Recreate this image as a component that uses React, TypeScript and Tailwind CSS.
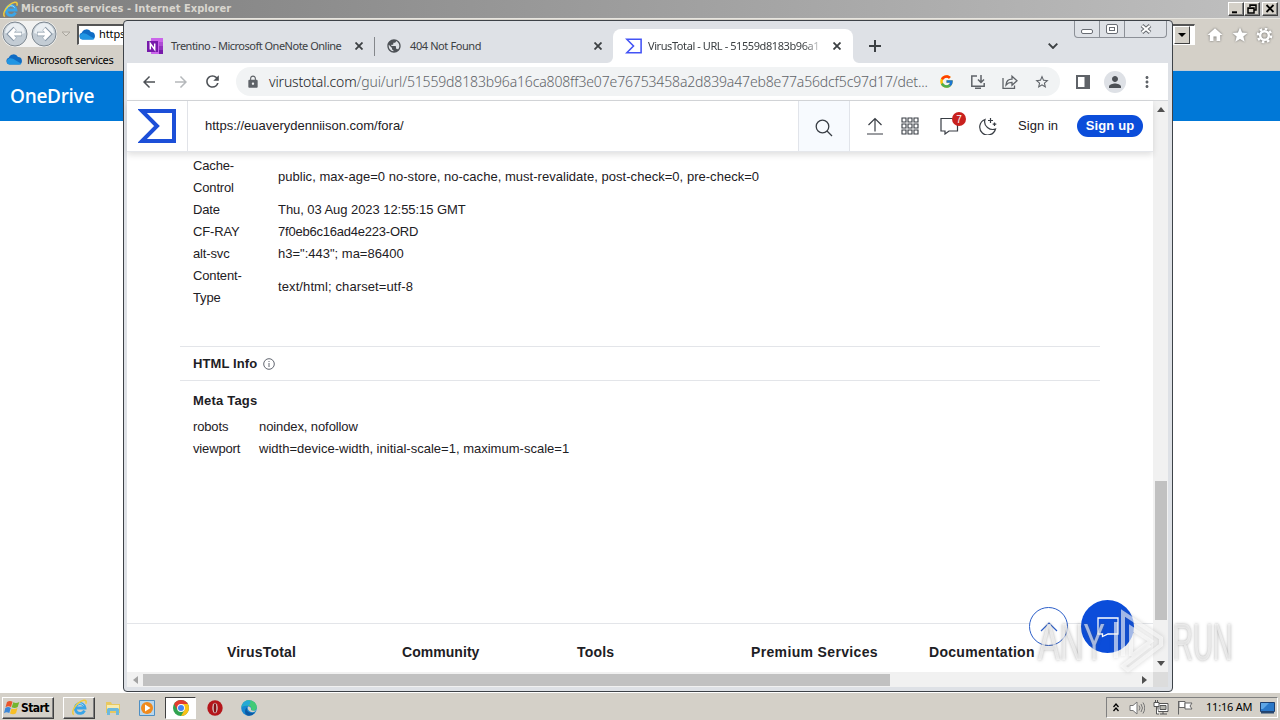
import React from 'react';
import {
  MdArrowBack,
  MdArrowForward,
  MdHome,
  MdLock,
  MdMoreVert,
  MdPerson,
  MdPublic,
  MdRefresh,
  MdStar,
  MdStarBorder,
} from 'react-icons/md';
import { FcGoogle } from 'react-icons/fc';

const headers = [
  { name: ['Cache-', 'Control'], value: 'public, max-age=0 no-store, no-cache, must-revalidate, post-check=0, pre-check=0', tracking: 'tracking-[0.03px]' },
  { name: ['Date'], value: 'Thu, 03 Aug 2023 12:55:15 GMT', tracking: 'tracking-[-0.06px]' },
  { name: ['CF-RAY'], value: '7f0eb6c16ad4e223-ORD', tracking: 'tracking-[-0.22px]' },
  { name: ['alt-svc'], value: 'h3=":443"; ma=86400', tracking: 'tracking-[0px]' },
  { name: ['Content-', 'Type'], value: 'text/html; charset=utf-8', tracking: 'tracking-[0.1px]' },
];

const metaTags = [
  { name: 'robots', value: 'noindex, nofollow', tracking: 'tracking-[-0.1px]' },
  { name: 'viewport', value: 'width=device-width, initial-scale=1, maximum-scale=1', tracking: 'tracking-[0.01px]' },
];

const Cloud = ({ className }: { className: string }) => (
  <svg viewBox="0 0 16 12" className={className}>
    <path d="M3.500 10.800A3.300 3.300 0 0 1 2.600 4.400 4.800 4.800 0 0 1 11.300 3.600a3.700 3.700 0 0 1 1.200 7.200z" fill="#0f6cc4" />
    <path d="M3.300 10.800a3 3 0 0 1-.5-5.800c2.500-.5 4 .3 5.700 1.500l6 3.500c-.5.6-1 .8-2 .8z" fill="#2196e3" />
  </svg>
);

const IeLogo = ({ className }: { className: string }) => (
  <svg viewBox="0 0 18 18" className={className} fill="none">
    <path d="M14.300 12.300a5.200 5.200 0 1 1 .5-2.800H5.500" stroke="#3aa5e8" strokeWidth="3" />
    <path d="M13.500 7a4.800 4.800 0 0 0-8.500 1" stroke="#a5dcf8" strokeWidth="1" />
    <path d="M3 16.500C-1 14 6 3 13.500 1.300c2.700-.3 3 1.700 2.200 3.700" stroke="#f0cb3c" strokeWidth="1.600" />
  </svg>
);

const Sigma = ({ className, color, width }: { className: string; color: string; width: number }) => (
  <svg viewBox="0 0 38 34" className={className} fill="none">
    <path d="M4 2h32v30H4l15-15z" stroke={color} strokeWidth={width} />
  </svg>
);

const TabClose = () => (
  <svg viewBox="0 0 8 8" className="size-2 shrink-0" fill="none" stroke="#3c4043" strokeWidth="1.800">
    <path d="m.5.500 7 7m0-7-7 7" />
  </svg>
);

const OneNote = () => (
  <svg viewBox="0 0 16 16" className="size-4 shrink-0">
    <path d="M4 0h12v16H4z" fill="#ca64ea" />
    <path d="M12 4h4v4h-4z" fill="#ae4bd5" />
    <path d="M12 8h4v4h-4z" fill="#9332bf" />
    <path d="M12 12h4v4h-4z" fill="#7719aa" />
    <path d="M0 3h11v11H0z" fill="#7719aa" />
    <path d="M3.300 11.500v-6l4.400 6v-6" stroke="#fff" strokeWidth="1.500" fill="none" />
  </svg>
);

const ClassicButton = ({ children }: { children: React.ReactNode }) => (
  <div className="h-[14px] w-4 border border-t-white border-l-white border-r-[#404040] border-b-[#404040] bg-[#d4d0c8] shadow-[inset_-1px_-1px_0_#808080]">
    <svg viewBox="0 0 14 12" className="h-3 w-[14px]" fill="none" stroke="#000" strokeWidth="1.500">
      {children}
    </svg>
  </div>
);

const RoundArrow = ({ flip }: { flip?: boolean }) => (
  <svg viewBox="0 0 26 26" className={flip ? 'size-[26px] -scale-x-100' : 'size-[26px]'}>
    <circle cx="13" cy="13" r="12" fill="#c3ccd4" stroke="#7d8790" />
    <path d="M3 12a10 10 0 0 1 20 0q-10 4-20 0" fill="#e9eef2" />
    <path d="M20 13H7.500M13 7.500 7.500 13l5.500 5.500" stroke="#8796a5" strokeWidth="4.600" fill="none" />
    <path d="M19.500 13H8m5-5-5 5 5 5" stroke="#fff" strokeWidth="3.200" fill="none" />
  </svg>
);

const ExplorerWindow = () => (
  <div className="flex h-[692px] flex-col bg-white">
    <div className="flex h-[18px] items-center bg-linear-to-r from-[#7d7d7d] to-[#c0c0c0] pr-0.5 pl-0.5">
      <IeLogo className="size-[17px]" />
      <span className="ml-0.5 font-['DejaVu_Sans_Condensed','DejaVu_Sans',sans-serif] text-[11px] font-bold tracking-[0.04px] text-[#d9d6cf]">
        Microsoft services - Internet Explorer
      </span>
      <div className="ml-auto flex">
        <ClassicButton>
          <path d="M3 9.300h5" strokeWidth="2" />
        </ClassicButton>
        <ClassicButton>
          <path d="M5 4V2h6v5H9M3 5h6v5H3zM3 5.300h6M5 2.300h6" />
        </ClassicButton>
        <span className="w-0.5" />
        <ClassicButton>
          <path d="m3.500 2 7 7m0-7-7 7" strokeWidth="1.800" />
        </ClassicButton>
      </div>
    </div>
    <div className="flex h-[31px] items-center border-t border-[#e8e6e0] bg-[#d4d0c8] pl-[2px]">
      <div className="flex gap-[3px] rounded-full bg-[#f2f2f1]">
        <RoundArrow />
        <RoundArrow flip />
      </div>
      <svg viewBox="0 0 10 6" className="ml-1 h-[6px] w-[10px]">
        <path d="M1 1h8L5 5z" fill="#dedbd4" stroke="#aaa69e" />
      </svg>
      <div className="ml-[6px] flex h-[21px] w-[1118px] items-center border-t-2 border-r border-b border-l-2 border-t-[#555] border-r-white border-b-white border-l-[#555] bg-white">
        <Cloud className="h-[13px] w-[17px]" />
        <span className="ml-[3px] font-['Noto_Sans',sans-serif] text-[11px] tracking-[-0.1px] text-black">https</span>
        <div className="mr-1 ml-auto flex h-[18px] w-4 items-center justify-center border border-t-white border-l-white border-r-[#404040] border-b-[#404040] bg-[#d4d0c8]">
          <svg viewBox="0 0 8 4" className="h-1 w-2">
            <path d="M0 0h8L4 4z" />
          </svg>
        </div>
      </div>
      <div className="ml-auto flex items-center gap-[7px] pt-0.5 pr-[7px] text-white drop-shadow-[0_0_1px_#666]">
        <MdHome className="size-[18px]" />
        <MdStar className="size-[18px]" />
        <svg viewBox="0 0 18 18" className="size-[17px]" fill="none" stroke="#fff">
          <circle cx="9" cy="9" r="4.600" strokeWidth="2.600" />
          <circle cx="9" cy="9" r="7" strokeWidth="2.600" strokeDasharray="2.750 2.750" />
        </svg>
      </div>
    </div>
    <div className="flex h-[22px] items-center border-b border-[#c3ccd4] bg-[#d4d0c8] pl-1.5">
      <Cloud className="h-[13px] w-[17px]" />
      <span className="ml-1 pt-px font-['Noto_Sans',sans-serif] text-[11px] tracking-[-0.36px] text-black">Microsoft services</span>
    </div>
    <div className="flex h-[50px] items-center bg-[#0078d7] pl-[10px]">
      <span className="font-['Open_Sans',sans-serif] text-[19px] font-semibold tracking-[-0.3px] text-white">OneDrive</span>
    </div>
  </div>
);

const TabStrip = () => (
  <div className="relative flex h-[42px] items-end font-['Noto_Sans',sans-serif] text-[11px] text-[#3c4043]">
    <div className="flex h-[34px] w-[248px] items-center pl-5">
      <OneNote />
      <span className="ml-2 w-[184px] whitespace-nowrap tracking-[-0.5px]">Trentino - Microsoft OneNote Online</span>
      <TabClose />
      <span className="ml-[11px] h-[19px] w-px bg-[#84878b]" />
    </div>
    <div className="flex h-[34px] w-[238px] items-center pl-[11px]">
      <MdPublic className="size-4 shrink-0 text-[#4d5156]" />
      <span className="ml-2 w-[184px] tracking-[-0.4px]">404 Not Found</span>
      <TabClose />
    </div>
    <div className="relative flex h-[34px] w-[240px] items-center rounded-t-lg bg-white pl-3">
      <svg viewBox="0 0 6 6" className="absolute bottom-0 -left-1.5 size-1.5">
        <path d="M6 0v6H0a6 6 0 0 0 6-6" fill="#fff" />
      </svg>
      <svg viewBox="0 0 6 6" className="absolute -right-1.5 bottom-0 size-1.5">
        <path d="M0 0v6h6a6 6 0 0 1-6-6" fill="#fff" />
      </svg>
      <Sigma className="h-4 w-[17px] shrink-0" color="#4353f5" width={3.5} />
      <span className="ml-1.5 w-[176px] mask-r-from-88% whitespace-nowrap tracking-[-0.42px]">VirusTotal - URL - 51559d8183b96a1</span>
      <span className="ml-[9px]">
        <TabClose />
      </span>
    </div>
    <svg viewBox="0 0 12 12" className="mb-[11px] ml-4 size-3" stroke="#3c4043" strokeWidth="2">
      <path d="M6 0v12M0 6h12" />
    </svg>
    <svg viewBox="0 0 10 6" className="mb-[14px] ml-[167px] h-[6px] w-[10px]" fill="none" stroke="#3c4043" strokeWidth="1.900">
      <path d="m.7.700 4.300 4.300L9.300.700" />
    </svg>
    <div className="absolute top-0 right-px flex h-[17px] w-[93px] rounded-b border border-t-0 border-[#8c9097]">
      <div className="flex w-[25px] items-center justify-center border-r border-[#8c9097]">
        <span className="mt-1 h-[5px] w-3 rounded-[2px] border border-[#686c73] bg-white" />
      </div>
      <div className="flex w-[25px] items-center justify-center border-r border-[#8c9097]">
        <span className="flex h-[10px] w-3 items-center justify-center rounded-[2px] border border-[#686c73] bg-white">
          <span className="h-1 w-[6px] border border-[#686c73]" />
        </span>
      </div>
      <div className="flex flex-1 items-center justify-center">
        <svg viewBox="0 0 12 10" className="h-[10px] w-3">
          <path d="m2 1.500 8 7m0-7-8 7" stroke="#666a70" strokeWidth="4" />
          <path d="m2.200 1.700 7.600 6.600m0-6.600-7.600 6.600" stroke="#fff" strokeWidth="2" />
        </svg>
      </div>
    </div>
  </div>
);

const Toolbar = () => (
  <div className="flex h-[38px] items-center border-b border-[#d5d7da] bg-white pl-[13px] text-[#5f6368]">
    <MdArrowBack className="size-[18px] text-[#4d5156]" />
    <MdArrowForward className="ml-[14px] size-[18px] text-[#b5b8bb]" />
    <MdRefresh className="ml-[13px] size-[19px] text-[#4d5156]" />
    <div className="ml-[14px] flex h-[29px] w-[824px] items-center rounded-full bg-[#f1f3f4] pl-[10px]">
      <MdLock className="size-[14px]" />
      <span className="ml-[9px] w-[661px] whitespace-nowrap font-['Noto_Sans',sans-serif] text-[14px] font-light tracking-[-0.15px] text-[#5f6368]">
        <span className="text-[#202124]">virustotal.com</span>/gui/url/51559d8183b96a16ca808ff3e07e76753458a2d839a47eb8e77a56dcf5c97d17/det...
      </span>
      <div className="ml-[9px] flex items-center gap-4">
        <FcGoogle className="size-[15px]" />
        <svg viewBox="0 0 16 16" className="size-4" fill="none" stroke="currentColor" strokeWidth="1.500">
          <path d="M7 2H1.800v10.200h12.400V9M5 14.200h6M11 1v7M8 5.500 11 8.500l3-3" />
        </svg>
        <svg viewBox="0 0 16 16" className="size-4" fill="none" stroke="currentColor" strokeWidth="1.300">
          <path d="M1 4v10.300h11.500V11.500M4 11c.3-4 2.700-5.800 6-5.800V2.300l5 4.500-5 4.500V8.300C7.500 8.200 5.600 9 4 11z" />
        </svg>
        <MdStarBorder className="size-4" />
      </div>
    </div>
    <svg viewBox="0 0 14 14" className="ml-4 size-[14px]">
      <path d="M0 0h14v14H0zM2 2v10h6.500V2z" fill="currentColor" fillRule="evenodd" />
    </svg>
    <div className="ml-[14px] flex size-[22px] items-center justify-center rounded-full bg-[#dee1e6]">
      <MdPerson className="size-[18px] text-[#4d5156]" />
    </div>
    <MdMoreVert className="ml-3 size-[18px]" />
  </div>
);

const PageHeader = () => (
  <div className="relative z-10 flex h-[51px] items-center border-b border-[#e5e7eb] bg-white text-[13px] text-[#1d2024] shadow-[0_3px_6px_rgba(0,0,0,0.12)]">
    <div className="flex h-full w-[61px] items-center border-r border-[#e1e3e8] pl-[11px]">
      <Sigma className="h-[34px] w-[38px]" color="#1c4fd8" width={4} />
    </div>
    <span className="ml-[17px] w-[593px] tracking-[0px]">https://euaverydenniison.com/fora/</span>
    <div className="flex h-full w-[52px] items-center justify-center border-x border-[#e1e4ea] bg-[#f7fafe]">
      <svg viewBox="0 0 18 18" className="mt-[3px] size-[18px]" fill="none" stroke="#383d44" strokeWidth="1.300">
        <circle cx="7.500" cy="7.500" r="6.300" />
        <path d="m12 12 5 5" />
      </svg>
    </div>
    <svg viewBox="0 0 16 18" className="ml-[17px] h-[18px] w-4" fill="none" stroke="#383d44" strokeWidth="1.200">
      <path d="M8 14.500V1.500M1.500 8 8 1.500 14.500 8M0 17h16" />
    </svg>
    <svg viewBox="0 0 18 18" className="ml-[18px] size-[18px]" fill="none" stroke="#383d44" strokeWidth="1.100">
      {[1, 7, 13].map((y) => [1, 7, 13].map((x) => <path key={`${x}-${y}`} d={`M${x} ${y}h4v4h-4z`} />))}
    </svg>
    <div className="relative ml-[21px] h-[18px] w-[19px]">
      <svg viewBox="0 0 19 18" className="h-[18px] w-[19px]" fill="none" stroke="#383d44" strokeWidth="1.200">
        <path d="M1 1.500h16.500v12.500H9L5 17v-3H1z" />
      </svg>
      <span className="absolute -top-[5px] left-3 flex size-[14px] items-center justify-center rounded-full bg-[#c9211e] text-[10px] text-white">7</span>
    </div>
    <svg viewBox="0 0 18 18" className="ml-[20px] size-[18px]" fill="none" stroke="#383d44" strokeWidth="1.200">
      <path d="M6 2.500A8 8 0 1 0 16.500 12C11 14 4 9 6 2.500z" />
      <path d="M11.500 1v5M9 3.500h5M15.500 5.500v3.500M13.700 7.200h3.600" />
    </svg>
    <span className="ml-[21px] w-[59px] tracking-[0.05px]">Sign in</span>
    <span className="flex h-[22px] w-[66px] items-center justify-center rounded-full bg-[#0b4dda] text-[13px] font-bold tracking-[0.15px] text-white">Sign up</span>
  </div>
);

const PageBody = () => (
  <div className="flex h-[520px] flex-col text-[13px] leading-[22px] text-[#1d2024]">
    <div className="pt-[3px] pl-[66px]">
      {headers.map((row) => (
        <div key={row.value} className="flex items-center">
          <div className="w-[85px] tracking-[-0.15px]">
            {row.name.map((line) => (
              <div key={line}>{line}</div>
            ))}
          </div>
          <div className={`whitespace-nowrap ${row.tracking}`}>{row.value}</div>
        </div>
      ))}
    </div>
    <div className="mt-[37px] mr-[53px] ml-[53px] flex h-[35px] items-center border-y border-[#e3e5e9] pl-[13px]">
      <span className="w-[70px] font-bold tracking-[0.1px]">HTML Info</span>
      <svg viewBox="0 0 12 12" className="size-3" fill="none" stroke="#505560" strokeWidth="0.900">
        <circle cx="6" cy="6" r="5.300" />
        <path d="M6 5v4M6 3v1" />
      </svg>
    </div>
    <div className="mt-[9px] pl-[66px]">
      <div className="mb-1 font-bold tracking-[0.2px]">Meta Tags</div>
      {metaTags.map((tag) => (
        <div key={tag.name} className="flex">
          <span className="w-[66px] tracking-[-0.15px]">{tag.name}</span>
          <span className={tag.tracking}>{tag.value}</span>
        </div>
      ))}
    </div>
    <div className="mt-auto flex h-[49px] border-t border-[#e3e5e9] pt-[17px] pl-[100px] text-[14px] font-bold tracking-[0.2px]">
      <span className="w-[175px]">VirusTotal</span>
      <span className="w-[175px] tracking-[0.05px]">Community</span>
      <span className="w-[174px]">Tools</span>
      <span className="w-[178px] tracking-[0.35px]">Premium Services</span>
      <span className="tracking-[0.3px]">Documentation</span>
    </div>
  </div>
);

const ChromeWindow = () => (
  <div className="absolute top-5 left-[123px] flex h-[672px] w-[1050px] flex-col rounded-[4px] border border-[#3d4248] bg-[#dee1e6] pr-1 pl-[3px]">
    <TabStrip />
    <Toolbar />
    <div className="flex h-[571px]">
      <div className="w-[1026px] bg-white font-['Liberation_Sans',Arial,sans-serif]">
        <PageHeader />
        <PageBody />
      </div>
      <div className="flex w-[15px] flex-col items-center bg-[#f1f1f1] py-[6px]">
        <svg viewBox="0 0 8 5" className="h-[5px] w-2">
          <path d="M0 5h8L4 0z" fill="#505050" />
        </svg>
        <span className="mt-auto h-[139px] w-3 bg-[#c1c1c1]" />
        <svg viewBox="0 0 8 5" className="mt-[41px] h-[5px] w-2">
          <path d="M0 0h8L4 5z" fill="#505050" />
        </svg>
      </div>
    </div>
    <div className="flex h-[15px]">
      <div className="flex w-[1026px] items-center bg-[#f1f1f1] px-[6px]">
        <svg viewBox="0 0 5 8" className="h-2 w-[5px]">
          <path d="M5 0v8L0 4z" fill="#a3a3a3" />
        </svg>
        <span className="ml-[5px] h-3 w-[747px] bg-[#c1c1c1]" />
        <svg viewBox="0 0 5 8" className="ml-auto h-2 w-[5px]">
          <path d="M0 0v8l5-4z" fill="#505050" />
        </svg>
      </div>
      <div className="w-[15px] bg-[#dcdcdc]" />
    </div>
  </div>
);

const FloatingButtons = () => (
  <>
    <div className="absolute top-[607px] left-[1029px] flex size-[39px] items-center justify-center rounded-full border border-[#2d5fc9] bg-white">
      <svg viewBox="0 0 18 10" className="h-[10px] w-[18px]" fill="none" stroke="#2d5fc9" strokeWidth="1.200">
        <path d="m1 9 8-8 8 8" />
      </svg>
    </div>
    <div className="absolute top-[600px] left-[1081px] flex size-[53px] items-center justify-center rounded-full bg-[#0b4dda]">
      <svg viewBox="0 0 22 21" className="size-[22px]" fill="none" stroke="#fff" strokeWidth="1.300">
        <path d="M1 1.500h20v16h-10L5.500 20v-2.500H1z" />
      </svg>
    </div>
  </>
);

const Watermark = () => (
  <div className="absolute top-[608px] left-[1038px] flex h-[68px] w-[196px] items-center font-['Liberation_Sans',sans-serif] text-[51px] leading-none text-white/60 [text-shadow:0_0_4px_rgba(90,90,90,0.5)]">
    <span className="w-[74px] origin-left scale-x-[0.64]">ANY</span>
    <svg viewBox="0 0 54 68" className="h-[68px] w-[54px] shrink-0 drop-shadow-[0_0_2px_rgba(90,90,90,0.45)]" fill="none" stroke="#fff" strokeOpacity="0.6" strokeWidth="4">
      <path d="M4 50V14M11 48V5l38 25v7L16 62l-5-4 27-21M19 48V20l20 13-20 15" />
    </svg>
    <span className="ml-[7px] w-[60px] origin-left scale-x-[0.54]">RUN</span>
  </div>
);

const WinFlag = () => (
  <svg viewBox="0 0 16 16" className="size-4">
    <path d="M3 2c2-1.500 4-1.200 5.500-.2L7 7c-2-1-3.500-1-5.500.2z" fill="#e9552b" />
    <path d="M9.300 2.300c2 1 4 .8 6-.4L13.700 7c-2 1.300-4 1.200-6 .3z" fill="#74b52f" />
    <path d="M1.300 8c2-1.300 4-1 5.500-.1L5.300 13c-2-1-3.500-1-5.300.2z" fill="#3c87d8" />
    <path d="M7.500 8.400c2 1 4 .8 6-.3L12 13.300c-2 1.200-4 1-6 .2z" fill="#f7bf26" />
  </svg>
);

const Taskbar = () => (
  <div className="flex h-7 items-center border-t border-white bg-[#d4d0c8] pt-0.5 text-[11px] text-black">
    <div className="ml-0.5 flex h-[22px] w-[52px] items-center border border-t-white border-l-white border-r-[#404040] border-b-[#404040] pl-px shadow-[inset_-1px_-1px_0_#808080]">
      <WinFlag />
      <span className="ml-px font-['DejaVu_Sans_Condensed','DejaVu_Sans',sans-serif] text-[12px] font-bold tracking-[-0.6px]">Start</span>
    </div>
    <div className="ml-[9px] flex h-[22px] w-8 items-center justify-center border border-t-white border-l-white border-r-[#404040] border-b-[#404040] shadow-[inset_-1px_-1px_0_#808080]">
      <IeLogo className="size-[17px]" />
    </div>
    <svg viewBox="0 0 16 16" className="ml-[10px] size-4">
      <path d="M1 2h5l1 2h8v9H1z" fill="#e8c860" />
      <path d="M2 5h12v6H2z" fill="#f8ebae" />
      <path d="M2 15V9.500c0-1 1-1.500 2-1.500h8c1 0 2 .5 2 1.500V15h-3v-4H5v4z" fill="#6db9dd" />
    </svg>
    <svg viewBox="0 0 16 16" className="ml-[18px] size-4">
      <path d="M.5.500h15v15H.5z" fill="#b9d7ed" stroke="#4e8fc3" />
      <circle cx="8" cy="8" r="6" fill="#f08a1d" />
      <path d="M6 4.500v7l5.500-3.500z" fill="#fff" />
    </svg>
    <div className="ml-[10px] flex h-[22px] w-[31px] items-center justify-center border border-t-[#404040] border-l-[#404040] border-r-white border-b-white bg-white">
      <svg viewBox="0 0 16 16" className="size-4">
        <circle cx="8" cy="8" r="8" fill="#31a350" />
        <path d="M8 4h6.900A8 8 0 0 1 8 16l3.500-6z" fill="#fbc116" />
        <path d="M1.100 4A8 8 0 0 1 14.900 4H8L4.500 10z" fill="#e33b2e" />
        <circle cx="8" cy="8" r="3.900" fill="#fff" />
        <circle cx="8" cy="8" r="3" fill="#4285f4" />
      </svg>
    </div>
    <svg viewBox="0 0 16 16" className="ml-[11px] size-4">
      <circle cx="8" cy="8" r="7.700" fill="#b5161b" />
      <ellipse cx="8" cy="8" rx="2.700" ry="5.300" fill="#d9c7c4" />
      <ellipse cx="8" cy="8" rx="1.300" ry="4.800" fill="#841015" />
    </svg>
    <svg viewBox="0 0 16 16" className="ml-[18px] size-4">
      <circle cx="8" cy="8" r="7.800" fill="#1688d1" />
      <path d="M.5 7C1.500 2 5 .2 8 .2c5 0 8 3.800 7.800 7.300-.2 3-4 4-5.800 2.500 1-2-.500-4.500-3-4.500-3 0-5 .500-6.500 1.500z" fill="#42ca76" />
      <path d="M.4 7C1.500 2.500 4.500.3 8 .2c2 1 2 4-1 5.300-3 0-5 .500-6.600 1.500z" fill="#25a9d6" />
      <path d="M6.500 7c-2 3 .5 7 7.500 5.500A8 8 0 0 1 8 15.800C3 15.500 3 9 6.500 7z" fill="#0c59a4" />
      <path d="M7 6.500c2-.5 3.500 1.500 3 3.500 1 1 3 1 5 .2-1 2-4 2.500-6 1.300S6 8 7 6.500z" fill="#d4d0c8" />
    </svg>
    <div className="mr-0.5 ml-auto flex h-[21px] w-[172px] items-center border border-t-[#808080] border-l-[#808080] border-r-white border-b-white pl-1.5">
      <svg viewBox="0 0 6 9" className="h-[9px] w-1.5" fill="none" stroke="#000" strokeWidth="1.300">
        <path d="m.5 4 2.500-3 2.500 3M.5 8 3 5l2.500 3" />
      </svg>
      <svg viewBox="0 0 16 14" className="ml-[10px] h-[14px] w-4" stroke="#777" fill="none">
        <path d="M1 4.500h3l4-3.500v12L4 9.500H1z" fill="#fff" />
        <path d="M10 4.500q2 2.500 0 5M12 3q3 4 0 8M14 1.500q3.500 5.500 0 11" />
      </svg>
      <svg viewBox="0 0 16 15" className="ml-2 h-[15px] w-4" stroke="#555" fill="#fff">
        <path d="M5 3.500h10v8H5zM7 14h7M10 12v2" />
        <path d="M7 5.500h6v4H7z" fill="#b5b5ae" />
        <path d="M1 2.500h5v4H1zM2.500 0v2.500M4.500 0v2.500M3.500 6.500V14H6" />
      </svg>
      <svg viewBox="0 0 16 15" className="ml-2 h-[15px] w-4" stroke="#666" fill="#fff">
        <path d="M1.500 1v13.500M2 1.500h6v6H2z" />
        <path d="M8 3h7l-2 3 2 3H8z" />
      </svg>
      <span className="ml-[13px] font-['Noto_Sans',sans-serif] text-[11px] tracking-[-0.2px] whitespace-nowrap">11:16 AM</span>
      <svg viewBox="0 0 15 12" className="mr-[2px] ml-auto h-3 w-[15px]">
        <path d="M.5.500h14v9H.5z" fill="#2b78c8" stroke="#1d3f70" />
        <path d="M1 1h8L3 7H1z" fill="#5da5e5" />
        <path d="M1 9.500h13v2H1z" fill="#29486f" />
      </svg>
    </div>
  </div>
);

const App = () => {
  return (
    <div className="relative h-[720px] w-[1280px] overflow-hidden bg-white">
      <ExplorerWindow />
      <Taskbar />
      <ChromeWindow />
      <FloatingButtons />
      <Watermark />
    </div>
  );
};

export default App;
